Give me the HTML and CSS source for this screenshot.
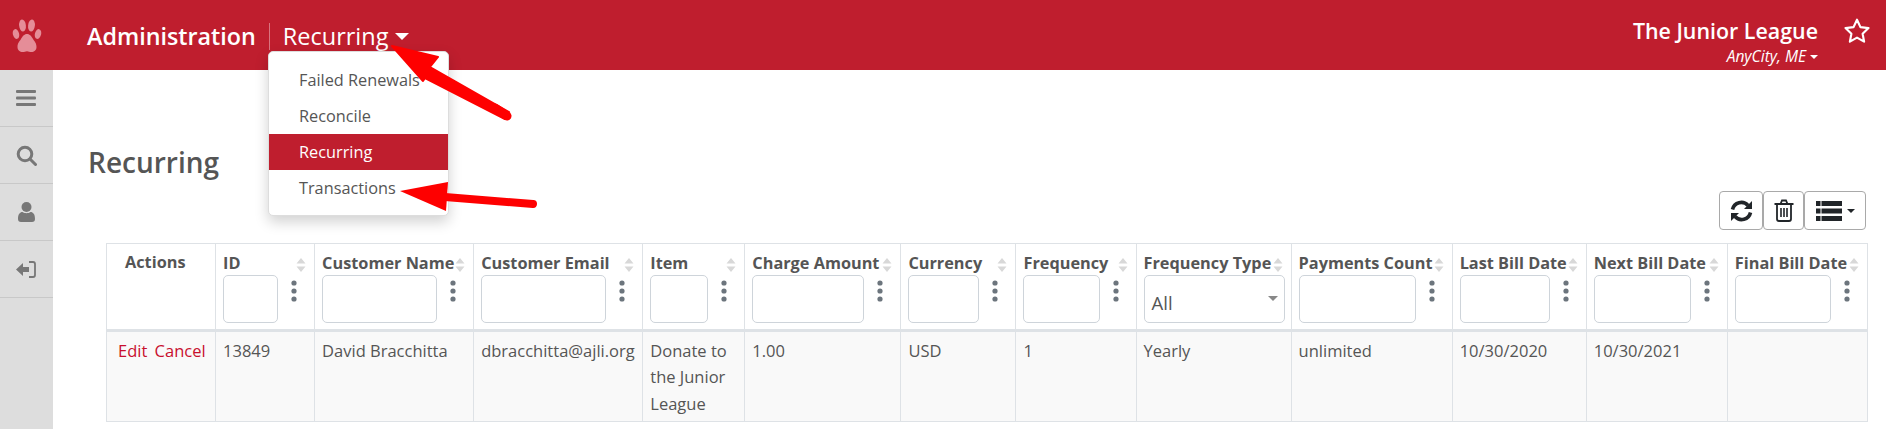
FILE: index.html
```html
<!DOCTYPE html>
<html lang="en">
<head>
<meta charset="utf-8">
<title>Recurring</title>
<link rel="stylesheet" href="styles.css">
</head>
<body>
<svg class="defs" width="0" height="0" aria-hidden="true">
  <symbol id="sort" viewBox="0 0 10 14"><path d="M5 0 L9.5 5.6 H0.5Z M5 14 L9.5 8.4 H0.5Z" fill="#d8d8d8"/></symbol>
  <symbol id="kebab" viewBox="0 0 6 22"><circle cx="3" cy="3" r="2.6"/><circle cx="3" cy="11" r="2.6"/><circle cx="3" cy="19" r="2.6"/></symbol>
</svg>
<header class="topbar">
  <div class="logo">
    <svg width="30" height="36" viewBox="0 0 30 36" fill="#e58d98">
      <ellipse cx="4" cy="17" rx="3.1" ry="5" transform="rotate(-14 4 17)"/>
      <ellipse cx="10.5" cy="8.5" rx="3.4" ry="6" transform="rotate(-6 10.5 8.5)"/>
      <ellipse cx="19.5" cy="8.5" rx="3.4" ry="6" transform="rotate(6 19.5 8.5)"/>
      <ellipse cx="26" cy="17" rx="3.1" ry="5" transform="rotate(14 26 17)"/>
      <path d="M15 17c-3 0-4.500 2.500-6 5-1.500 2.500-3.500 4-3.500 8 0 3.500 2.500 5 5 5 2 0 3-.8 4.500-.8s2.500.8 4.500.8c2.500 0 5-1.500 5-5 0-4-2-5.500-3.500-8-1.500-2.500-3-5-6-5z"/>
    </svg>
  </div>
  <div class="app-name">Administration</div>
  <div class="section">Recurring<span class="caret caret-lg"></span></div>
  <div class="org">
    <div class="org-name">The Junior League</div>
    <div class="org-city">AnyCity, ME<span class="caret caret-sm"></span></div>
  </div>
  <svg class="star" width="28" height="28" viewBox="0 0 26 26"><path d="M13 2.500l3.200 6.900 7.500.9-5.500 5.200 1.400 7.400L13 19.200l-6.600 3.700 1.400-7.400-5.500-5.200 7.500-.9z" fill="none" stroke="#fff" stroke-width="2" stroke-linejoin="round"/></svg>
</header>
<div class="layout">
  <nav class="sidebar">
    <a class="side-item"><svg width="20" height="16" viewBox="0 0 20 16" fill="#777"><rect width="20" height="3" y="0" rx="1"/><rect width="20" height="3" y="6.500" rx="1"/><rect width="20" height="3" y="13" rx="1"/></svg></a>
    <a class="side-item"><svg width="21" height="21" viewBox="0 0 21 21" fill="none" stroke="#777" stroke-width="3"><circle cx="9" cy="9" r="6.800"/><path d="M14 14l5.500 5.500" stroke-linecap="round"/></svg></a>
    <a class="side-item"><svg width="17" height="20" viewBox="0 0 17 20" fill="#777"><circle cx="8.500" cy="5" r="5"/><path d="M0 17c0-5 2-7 4.500-7 1 .8 2.500 1.200 4 1.200s3-.4 4-1.200C15 10 17 12 17 17c0 2-1 3-3 3H3c-2 0-3-1-3-3z"/></svg></a>
    <a class="side-item"><svg width="20" height="17" viewBox="0 0 20 17" fill="#777"><path d="M0 8.500L7 2v4h6v5H7v4z"/><path d="M13 1h4c1.200 0 2 .8 2 2v11c0 1.200-.8 2-2 2h-4" fill="none" stroke="#777" stroke-width="1.800"/></svg></a>
  </nav>
  <main class="content">
    <h2 class="page-title">Recurring</h2>
    <div class="toolbar">
      <button class="tool tool-refresh"><svg width="23" height="22" viewBox="0 0 23 22"><g fill="none" stroke="#212529" stroke-width="3.600"><path d="M2.500 9.500A9 9 0 0 1 18 5.500"/><path d="M20.500 12.500A9 9 0 0 1 5 16.500"/></g><path d="M22 1v8h-8zM1 21v-8h8z" fill="#212529"/></svg></button>
      <button class="tool tool-trash"><svg width="20" height="23" viewBox="0 0 20 23" fill="none" stroke="#212529" stroke-width="1.800"><path d="M0.500 5h19M6.500 5l1.500-3.500h4L13.500 5"/><path d="M3 5v15c0 1.200.8 2 2 2h10c1.200 0 2-.8 2-2V5"/><path d="M7 9v9M10 9v9M13 9v9" stroke-width="1.600"/></svg></button>
      <button class="tool tool-list"><svg width="26" height="20" viewBox="0 0 26 20" fill="#212529"><rect x="0" y="0" width="4.500" height="5"/><rect x="0" y="7.500" width="4.500" height="5"/><rect x="0" y="15" width="4.500" height="5"/><rect x="5.500" y="0" width="20.500" height="5"/><rect x="5.500" y="7.500" width="20.500" height="5"/><rect x="5.500" y="15" width="20.500" height="5"/></svg><span class="caret caret-dark"></span></button>
    </div>
    <table class="grid">
      <thead>
        <tr>
          <th class="col-actions actions-head">Actions</th>
          <th class="col-id"><div class="head-line"><span>ID</span><svg class="sort"><use href="#sort"/></svg></div><div class="filter-line"><input class="filter"><svg class="kebab"><use href="#kebab"/></svg></div></th>
          <th class="col-name"><div class="head-line"><span>Customer Name</span><svg class="sort"><use href="#sort"/></svg></div><div class="filter-line"><input class="filter"><svg class="kebab"><use href="#kebab"/></svg></div></th>
          <th class="col-email"><div class="head-line"><span>Customer Email</span><svg class="sort"><use href="#sort"/></svg></div><div class="filter-line"><input class="filter"><svg class="kebab"><use href="#kebab"/></svg></div></th>
          <th class="col-item"><div class="head-line"><span>Item</span><svg class="sort"><use href="#sort"/></svg></div><div class="filter-line"><input class="filter"><svg class="kebab"><use href="#kebab"/></svg></div></th>
          <th class="col-amount"><div class="head-line"><span>Charge Amount</span><svg class="sort"><use href="#sort"/></svg></div><div class="filter-line"><input class="filter"><svg class="kebab"><use href="#kebab"/></svg></div></th>
          <th class="col-currency"><div class="head-line"><span>Currency</span><svg class="sort"><use href="#sort"/></svg></div><div class="filter-line"><input class="filter"><svg class="kebab"><use href="#kebab"/></svg></div></th>
          <th class="col-freq"><div class="head-line"><span>Frequency</span><svg class="sort"><use href="#sort"/></svg></div><div class="filter-line"><input class="filter"><svg class="kebab"><use href="#kebab"/></svg></div></th>
          <th class="col-type"><div class="head-line"><span>Frequency Type</span><svg class="sort"><use href="#sort"/></svg></div><div class="filter-line"><div class="select">All<span class="select-caret"></span></div></div></th>
          <th class="col-count"><div class="head-line"><span>Payments Count</span><svg class="sort"><use href="#sort"/></svg></div><div class="filter-line"><input class="filter"><svg class="kebab"><use href="#kebab"/></svg></div></th>
          <th class="col-last"><div class="head-line"><span>Last Bill Date</span><svg class="sort"><use href="#sort"/></svg></div><div class="filter-line"><input class="filter"><svg class="kebab"><use href="#kebab"/></svg></div></th>
          <th class="col-next"><div class="head-line"><span>Next Bill Date</span><svg class="sort"><use href="#sort"/></svg></div><div class="filter-line"><input class="filter"><svg class="kebab"><use href="#kebab"/></svg></div></th>
          <th class="col-final"><div class="head-line"><span>Final Bill Date</span><svg class="sort"><use href="#sort"/></svg></div><div class="filter-line"><input class="filter"><svg class="kebab"><use href="#kebab"/></svg></div></th>
        </tr>
      </thead>
      <tbody>
        <tr>
          <td class="actions-cell"><a class="link">Edit</a> <a class="link">Cancel</a></td>
          <td>13849</td>
          <td>David Bracchitta</td>
          <td>dbracchitta@ajli.org</td>
          <td>Donate to the Junior League</td>
          <td>1.00</td>
          <td>USD</td>
          <td>1</td>
          <td>Yearly</td>
          <td>unlimited</td>
          <td>10/30/2020</td>
          <td>10/30/2021</td>
          <td></td>
        </tr>
      </tbody>
    </table>
  </main>
</div>
<div class="menu">
  <a class="menu-item">Failed Renewals</a>
  <a class="menu-item">Reconcile</a>
  <a class="menu-item active">Recurring</a>
  <a class="menu-item">Transactions</a>
</div>
<svg class="annotations" width="1886" height="429" viewBox="0 0 1886 429" aria-hidden="true">
  <path d="M392 46L438 57 430 67 509 112 505 119 425 78 423 81z" fill="#fe0000" stroke="#fe0000" stroke-width="2" stroke-linejoin="round"/>
  <path d="M507 116L495 108" stroke="#fe0000" stroke-width="9" stroke-linecap="round"/>
  <path d="M400 191L448 182 447 197 446 211z" fill="#fe0000"/>
  <path d="M445 197L533 204" stroke="#fe0000" stroke-width="8" stroke-linecap="round"/>
</svg>
</body>
</html>
```
FILE: styles.css
```css
* { box-sizing: border-box; }
html, body { margin: 0; height: 100%; overflow: hidden; }
body { font-family: "Open Sans", "Noto Sans", sans-serif; font-size: 16px; color: #555; background: #fff; }
.defs { display: block; height: 0; }

.topbar { height: 70px; background: #bf1e2e; color: #fff; display: flex; align-items: center; }
.logo { width: 53px; display: flex; justify-content: center; align-self: flex-start; padding-top: 17px; flex: none; }
.app-name { margin: 2px 0 0 34px; font-size: 23.300px; font-weight: 600; padding-right: 13px; height: 27px; line-height: 27px; }
.section { margin-top: 2px; border-left: 1px solid #d9747f; padding-left: 13px; font-size: 23.500px; height: 27px; line-height: 27px; display: flex; align-items: center; }
.caret { display: inline-block; border-style: solid; border-color: transparent; border-bottom-width: 0; }
.caret-lg { border-width: 7px 7px 0; border-top-color: #fff; margin-left: 7px; }
.caret-sm { border-width: 4px 4px 0; border-top-color: #fff; margin-left: 4px; vertical-align: 3px; }
.caret-dark { border-width: 4.500px 4.500px 0; border-top-color: #212529; margin-left: 5px; vertical-align: 3px; }
.org { margin-left: auto; text-align: right; padding-top: 12px; }
.org-name { font-size: 21.400px; font-weight: 600; line-height: 30px; }
.org-city { font-size: 15.600px; font-style: italic; line-height: 20px; }
.star { margin: 0 15px 8px 25px; flex: none; }

.layout { display: flex; height: 359px; }
.sidebar { width: 53px; flex: none; background: #ddd; }
.side-item { height: 57px; border-bottom: 1px solid #c8c8c8; display: flex; align-items: center; justify-content: center; padding-right: 1px; }
.content { flex: 1; min-width: 0; position: relative; padding: 0 18px 0 35px; }

.page-title { margin: 0; padding-top: 72px; font-size: 28px; font-weight: 600; line-height: 40px; color: #555; }
.toolbar { display: flex; justify-content: flex-end; margin-top: 9px; height: 39px; padding-right: 2px; }
.tool { height: 39px; background: #fff; border: 1px solid #a9a9a9; border-radius: 4px; padding: 0; display: flex; align-items: center; justify-content: center; }
.tool-refresh { width: 44px; }
.tool-trash { width: 41px; }
.tool-list { width: 62px; }

.grid { margin: 13px 0 0 18px; width: 1762px; border-collapse: collapse; table-layout: fixed; }
.grid th, .grid td { border: 1px solid #dee2e6; vertical-align: top; text-align: left; }
.grid th { padding: 7px 8px 6px 7px; font-weight: 700; font-size: 16.300px; line-height: 22px; height: 86px; border-bottom-width: 3px; color: #555; white-space: nowrap; }
.grid td { padding: 5.500px 7px 4px; line-height: 26.500px; height: 89px; font-size: 16.500px; background: #f9f9f9; color: #555; }
.grid .actions-cell { padding: 5.500px 0 4px 11px; white-space: nowrap; }
.grid .actions-head { padding-left: 18px; }
.link { color: #c8102e; margin-right: 3px; }

.col-actions { width: 109px; }
.col-id { width: 99px; }
.col-name { width: 159px; }
.col-email { width: 169px; }
.col-item { width: 102px; }
.col-amount { width: 156px; }
.col-currency { width: 115px; }
.col-freq { width: 120px; }
.col-type { width: 155px; }
.col-count { width: 161px; }
.col-last { width: 134px; }
.col-next { width: 141px; }
.col-final { width: 140px; }

.head-line { display: flex; justify-content: space-between; align-items: center; height: 23px; white-space: nowrap; }
.sort { width: 10px; height: 14px; flex: none; margin-top: 5px; }
.filter-line { display: flex; height: 48px; margin-top: 1px; }
.filter { flex: 1; min-width: 0; height: 48px; border: 1px solid #ced4da; border-radius: 5px; background: #fff; padding: 0; }
.kebab { width: 6px; height: 22px; flex: none; fill: #6c757d; margin: 5px 9px 0 13px; }
.select { flex: 1; height: 48px; margin-right: -2px; border: 1px solid #ced4da; border-radius: 5px; background: #fff; font-weight: 400; font-size: 18.500px; line-height: 54px; padding-left: 7px; position: relative; color: #555; }
.select-caret { position: absolute; right: 6px; top: 20px; border-style: solid; border-color: #888 transparent transparent; border-width: 5px 5px 0; }

.menu { position: absolute; left: 268px; top: 51px; width: 181px; height: 165px; padding: 10px 0; background: #fff; border-radius: 5px; border: 1px solid #ddd; box-shadow: 0 6px 14px rgba(0,0,0,.18); }
.menu-item { display: block; height: 36px; line-height: 36px; padding-left: 30px; font-size: 16.300px; color: #555; }
.menu-item.active { background: #bf1e2e; color: #fff; }
.annotations { position: absolute; left: 0; top: 0; pointer-events: none; }
```
